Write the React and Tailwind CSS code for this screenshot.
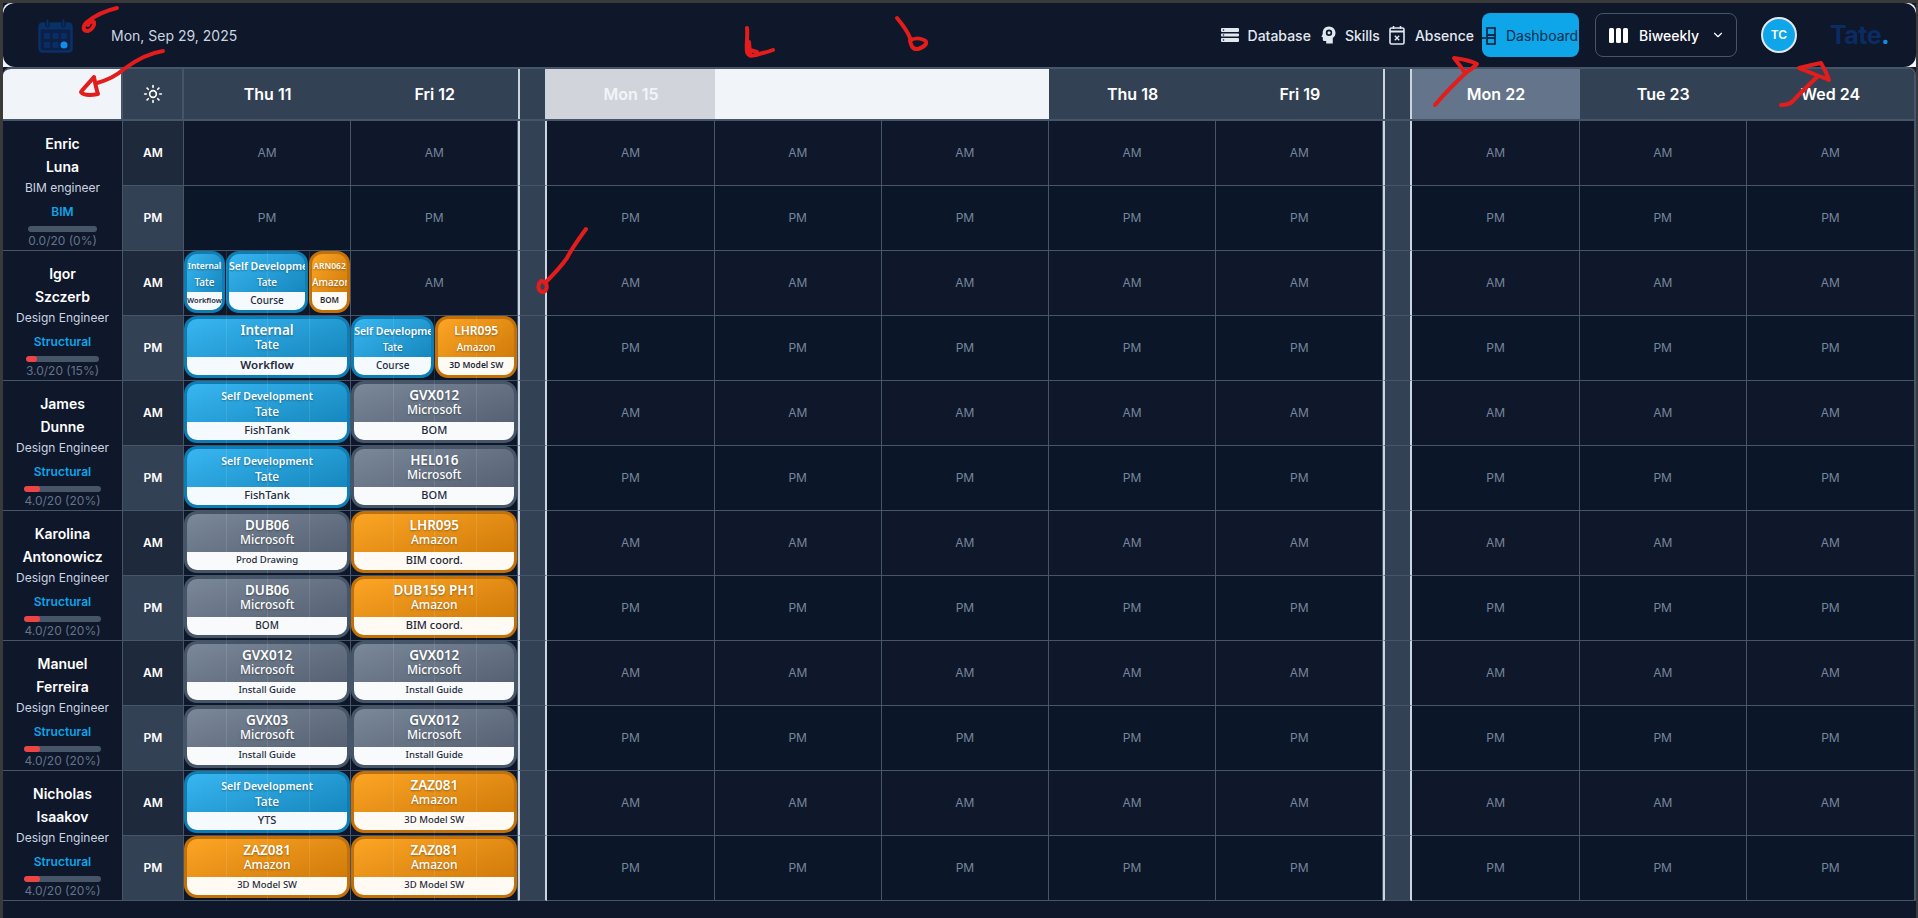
import React from "react";
import { ChevronDown, Sun } from "lucide-react";

const F = { fontFamily: "Inter, 'Liberation Sans', sans-serif" };
const CF = { fontFamily: "'Noto Sans', 'Open Sans', sans-serif" };

const blue = {
  shell: "border-[#0e7db3] bg-gradient-to-br from-[#38b6f1] to-[#0b7fb4]",
  band: "bg-[#f5faff] text-[#1e293b]",
};
const gray = {
  shell: "border-[#475569] bg-gradient-to-br from-[#7b8899] to-[#4f5b6c]",
  band: "bg-[#f8fafc] text-[#1e293b]",
};
const orange = {
  shell: "border-[#c2700a] bg-gradient-to-br from-[#fca524] to-[#c97403]",
  band: "bg-[#fffaf3] text-[#1e293b]",
};

function Card({ c, t, s, d, tone, width = "flex-1", tClass = "text-[13.5px] leading-[15px]", dClass = "text-[11px]" }) {
  return (
    <div className={`${width} ${tone.shell} h-[62px] min-w-0 rounded-[13px] border-[3px] overflow-hidden flex flex-col`}>
      <div className="flex-1 min-h-0 flex flex-col justify-center text-white text-center whitespace-nowrap pb-[1px] [text-shadow:0_1px_2px_rgba(0,0,0,0.35)]">
        <div className={`${tClass} w-full overflow-x-clip font-semibold`}>{t}</div>
        <div className={`${s} w-full overflow-x-clip font-medium leading-[14px]`}>{c}</div>
      </div>
      <div className={`${tone.band} ${dClass} h-[18px] shrink-0 text-center font-medium leading-[16px] whitespace-nowrap overflow-x-clip`}>{d}</div>
    </div>
  );
}

const selfDevTitle = "text-[10.5px] leading-[18px] tracking-[0.1px]";
const Self = (d) => <Card tone={blue} t="Self Development" c="Tate" s="text-[12px]" d={d} tClass={selfDevTitle} />;
const Ms = (t, d, dClass) => <Card tone={gray} t={t} c="Microsoft" s="text-[12px]" d={d} dClass={dClass} />;
const Am = (t, d, dClass) => <Card tone={orange} t={t} c="Amazon" s="text-[12px]" d={d} dClass={dClass} />;

const small = "text-[8.5px] leading-[18px]";

const people = [
  {
    first: "Enric", last: "Luna", role: "BIM engineer", team: "BIM", load: "0.0/20 (0%)", pct: 0,
    cards: [[null, null], [null, null]],
  },
  {
    first: "Igor", last: "Szczerb", role: "Design Engineer", team: "Structural", load: "3.0/20 (15%)", pct: 15,
    cards: [
      [
        <div className="flex gap-[1px] h-full">
          <Card tone={blue} width="w-[41px]" t="Internal" c="Tate" s="text-[10px]" d="Workflow" tClass={small} dClass="text-[7.5px] font-semibold" />
          <Card tone={blue} width="w-[82px]" t="Self Development" c="Tate" s="text-[10px]" d="Course" tClass="text-[10.5px] leading-[18px]" dClass="text-[10px]" />
          <Card tone={orange} width="w-[41px]" t="ARN062" c="Amazon" s="text-[10px]" d="BOM" tClass={small} dClass="text-[8px] font-semibold" />
        </div>,
        null,
      ],
      [
        <Card tone={blue} t="Internal" c="Tate" s="text-[12px]" d="Workflow" dClass="text-[11.5px] font-semibold" />,
        <div className="flex gap-[1px] h-full">
          <Card tone={blue} width="w-[83px]" t="Self Development" c="Tate" s="text-[10px]" d="Course" tClass="text-[10.5px] leading-[18px]" dClass="text-[10px]" />
          <Card tone={orange} width="w-[82px]" t="LHR095" c="Amazon" s="text-[10px]" d="3D Model SW" tClass="text-[12px] leading-[18px]" dClass="text-[8.5px] font-semibold" />
        </div>,
      ],
    ],
  },
  {
    first: "James", last: "Dunne", role: "Design Engineer", team: "Structural", load: "4.0/20 (20%)", pct: 20,
    cards: [
      [Self("FishTank"), Ms("GVX012", "BOM")],
      [Self("FishTank"), Ms("HEL016", "BOM")],
    ],
  },
  {
    first: "Karolina", last: "Antonowicz", role: "Design Engineer", team: "Structural", load: "4.0/20 (20%)", pct: 20,
    cards: [
      [Ms("DUB06", "Prod Drawing", "text-[9.5px]"), Am("LHR095", "BIM coord.")],
      [Ms("DUB06", "BOM", "text-[10px]"), Am("DUB159 PH1", "BIM coord.")],
    ],
  },
  {
    first: "Manuel", last: "Ferreira", role: "Design Engineer", team: "Structural", load: "4.0/20 (20%)", pct: 20,
    cards: [
      [Ms("GVX012", "Install Guide", "text-[9.5px]"), Ms("GVX012", "Install Guide", "text-[9.5px]")],
      [Ms("GVX03", "Install Guide", "text-[9.5px]"), Ms("GVX012", "Install Guide", "text-[9.5px]")],
    ],
  },
  {
    first: "Nicholas", last: "Isaakov", role: "Design Engineer", team: "Structural", load: "4.0/20 (20%)", pct: 20,
    cards: [
      [Self("YTS"), Am("ZAZ081", "3D Model SW", "text-[9.5px]")],
      [Am("ZAZ081", "3D Model SW", "text-[9.5px]"), Am("ZAZ081", "3D Model SW", "text-[9.5px]")],
    ],
  },
];

function DayHead({ children, className = "bg-[#334155] text-white" }) {
  return <div className={`${className} h-[50px] flex items-center justify-center text-[16px] font-semibold`}>{children}</div>;
}

function Gap({ head }) {
  return <div className={`${head ? "h-[50px]" : "h-[65px] border-b border-b-[#475569]"} bg-[#334155] border-l-2 border-r-2 border-l-[#cbd5e1] border-r-[#cbd5e1]`} />;
}

function Slot({ label, am, children, last }) {
  return (
    <div className={`relative h-[65px] border-b border-r border-[#475569] flex items-center justify-center text-[12px] text-[#76869c] ${am ? "bg-[#0f172a]" : "bg-[#0b1728]"} ${last ? "border-r-0" : ""}`}>
      {children ? (
        <>
          <div style={CF} className="absolute left-0 right-0 top-0 h-[62px]">{children}</div>
          <div className="absolute top-0 bottom-0 left-1/4 w-px bg-white/10" />
          <div className="absolute top-0 bottom-0 left-1/2 w-px bg-white/10" />
          <div className="absolute top-0 bottom-0 left-3/4 w-px bg-white/10" />
        </>
      ) : (
        label
      )}
    </div>
  );
}

function PersonRows({ p }) {
  const rows = [0, 1];
  return (
    <>
      {rows.map((r) => {
        const am = r === 0;
        const label = am ? "AM" : "PM";
        return (
          <React.Fragment key={r}>
            {am && (
              <div className="row-span-2 h-[130px] border-b border-r border-[#475569] bg-[#0f172a] flex flex-col items-center pt-[11px] overflow-hidden">
                <div className="text-[14px] font-semibold leading-[23px] text-white">{p.first}</div>
                <div className="text-[14px] font-semibold leading-[23px] text-white">{p.last}</div>
                <div className="text-[12px] leading-[19px] text-[#cbd5e1]">{p.role}</div>
                <div className="mt-[6px] text-[12px] font-semibold leading-[18px] text-[#0ea5e9]">{p.team}</div>
                <div className="mt-[5px] inline-flex flex-col">
                  <div className="h-[6px] rounded-full bg-[#475569] overflow-hidden">
                    <div className="h-full rounded-full bg-[#ef4444]" style={{ width: `${p.pct}%` }} />
                  </div>
                  <div className="text-[12px] leading-[18px] text-[#64748b] whitespace-nowrap">{p.load}</div>
                </div>
              </div>
            )}
            <div className={`h-[65px] border-b border-r border-[#475569] flex items-center justify-center text-[12px] font-semibold text-white ${am ? "bg-[#1e293b]" : "bg-[#334155]"}`}>{label}</div>
            <Slot label={label} am={am}>{p.cards[r][0]}</Slot>
            <Slot label={label} am={am}>{p.cards[r][1]}</Slot>
            <Gap />
            {[0, 1, 2, 3, 4].map((i) => <Slot key={i} label={label} am={am} />)}
            <Gap />
            {[0, 1, 2].map((i) => <Slot key={i} label={label} am={am} last={i === 2} />)}
          </React.Fragment>
        );
      })}
    </>
  );
}

function DbIcon() {
  return (
    <svg width="18" height="16" viewBox="0 0 18 16" fill="#e2e8f0">
      <path d="M1 1h16a1 1 0 0 1 1 1v2a1 1 0 0 1-1 1H1a1 1 0 0 1-1-1V2a1 1 0 0 1 1-1Zm0 5.500h16a1 1 0 0 1 1 1v1a1 1 0 0 1-1 1H1a1 1 0 0 1-1-1v-1a1 1 0 0 1 1-1Zm0 4.500h16a1 1 0 0 1 1 1v2a1 1 0 0 1-1 1H1a1 1 0 0 1-1-1v-2a1 1 0 0 1 1-1Z" />
      <circle cx="2.500" cy="3" r="0.800" fill="#0f172a" />
      <circle cx="2.500" cy="8" r="0.800" fill="#0f172a" />
      <circle cx="2.500" cy="13" r="0.800" fill="#0f172a" />
    </svg>
  );
}
function SkillIcon() {
  return (
    <svg width="15" height="18" viewBox="0 0 15 18" fill="#e2e8f0">
      <path d="M7.800 0.500C11.600 0.500 14.500 3.300 14.500 6.900c0 2.300-1.100 3.900-2.700 5V17.500H5.200v-2.400H3.300c-.9 0-1.500-.7-1.500-1.500v-2.300L.4 10.700 1.700 8V6.900C1.700 3.300 4.200 0.500 7.800 0.500Z" />
      <circle cx="8" cy="6.800" r="3.200" fill="#0f172a" />
      <circle cx="8" cy="6.800" r="1.500" fill="#e2e8f0" />
    </svg>
  );
}
function AbsIcon() {
  return (
    <svg width="16" height="20" viewBox="0 0 16 20" fill="none" stroke="#e2e8f0">
      <rect x="1" y="3" width="14" height="16" rx="1.500" strokeWidth="1.600" />
      <path d="M1 6.500h14" strokeWidth="2" />
      <path d="M4.500 1v3M11.500 1v3" strokeWidth="1.600" />
      <path d="M5.800 10.800l4.400 4.400M10.200 10.800l-4.400 4.400" strokeWidth="1.400" />
    </svg>
  );
}
function DashIcon() {
  return (
    <svg width="14" height="18" viewBox="0 0 14 18" fill="none" stroke="#0c2d4d" strokeWidth="1.800" className="absolute left-0 top-[14px]">
      <path d="M0 11h4" />
      <rect x="5" y="1" width="8" height="16" />
      <path d="M5 8h8M5 11h8" />
    </svg>
  );
}

function CalendarLogo() {
  const cells = [[6, 15], [14.5, 15], [23, 15], [6, 24], [14.5, 24]];
  return (
    <svg width="35" height="35" viewBox="0 0 35 35">
      <rect x="1.500" y="5.500" width="32" height="28" rx="3" fill="#0c1f45" stroke="#0a3068" strokeWidth="2.500" />
      <rect x="1.500" y="5.500" width="32" height="6" fill="#0a3068" />
      <rect x="8" y="1" width="3" height="8" rx="1.500" fill="#0a3068" stroke="#0f172a" />
      <rect x="24" y="1" width="3" height="8" rx="1.500" fill="#0a3068" stroke="#0f172a" />
      {cells.map(([x, y]) => <rect key={`${x}-${y}`} x={x} y={y} width="6" height="6" rx="1" fill="#0a2d66" />)}
      <circle cx="26" cy="27" r="3.500" fill="#0e8fe9" />
    </svg>
  );
}

const inkPaths = [
  "M117 8C108 10 96 15 87 22C82 27 83 31 88 31C92 30 95 25 94 22C92 21 89 22 88 25",
  "M163 51C150 53 136 60 124 69C116 76 108 80 97 83M94 77C89 83 83 89 81 92C84 96 93 95 98 94C96 88 95 82 94 77Z",
  "M586 229C578 240 572 248 567 258C560 268 552 276 545 283M541 281C537 285 538 291 542 292C547 292 548 286 545 282Z",
  "M747 28C748 36 746 44 747 52C749 57 752 56 756 55C762 53 768 52 773 50M749 42L750 54M750 50L757 52",
  "M897 18C902 24 908 32 910 38C910 44 912 50 918 49C925 47 929 42 924 40C919 38 913 38 910 41",
  "M1435 105C1446 92 1458 80 1469 70M1454 58C1461 59 1470 60 1477 64C1473 68 1469 71 1465 73C1462 68 1458 63 1454 58Z",
  "M1781 105C1786 105 1790 104 1793 101C1801 92 1810 84 1817 77M1799 68C1807 66 1815 64 1821 63C1824 68 1827 74 1829 80C1820 76 1808 72 1799 68Z",
];

function Ink() {
  return (
    <svg className="absolute left-0 top-0 pointer-events-none" width="1918" height="918" fill="none" stroke="#e31c1c" strokeWidth="4" strokeLinecap="round" strokeLinejoin="round">
      {inkPaths.map((d) => <path key={d} d={d} />)}
    </svg>
  );
}

export default function App() {
  return (
    <div style={F} className="relative w-[1918px] h-[918px] overflow-hidden bg-[#3a3a3a] pt-[3px] pl-[3px] pr-[2px]">
      <div className="h-[915px] bg-[#0f172a] flex flex-col">
        <div className="bg-[#f1f5f9] h-[64px] shrink-0 rounded-t-lg">
          <header className="h-[64px] bg-[#0f172a] rounded-xl flex items-center pl-[35px] pr-[27px]">
            <CalendarLogo />
            <span className="ml-[38px] text-[14px] text-[#cbd5e1]">Mon, Sep 29, 2025</span>
            <nav className="ml-auto flex items-center text-[14px] font-medium text-[#e2e8f0]">
              <DbIcon />
              <span className="ml-[9px]">Database</span>
              <span className="ml-[10px]"><SkillIcon /></span>
              <span className="ml-[9px]">Skills</span>
              <span className="ml-[9px]"><AbsIcon /></span>
              <span className="ml-[10px]">Absence</span>
              <span className="relative ml-[8px] w-[97px] h-[44px] rounded-lg bg-[#0ea5e9] text-[#0c2d4d] font-normal flex items-center pl-[24px] whitespace-nowrap">
                <DashIcon />Dashboard
              </span>
              <span className="ml-[16px] w-[142px] h-[44px] rounded-lg border border-[#475569] flex items-center pl-[13px] text-white">
                <span className="flex gap-[2px]">
                  <i className="block w-[5px] h-[15px] rounded-[1.500px] bg-white" />
                  <i className="block w-[5px] h-[15px] rounded-[1.500px] bg-white" />
                  <i className="block w-[5px] h-[15px] rounded-[1.500px] bg-white" />
                </span>
                <span className="ml-[11px]">Biweekly</span>
                <ChevronDown size={14} className="ml-[12px]" />
              </span>
              <span className="ml-[24px] w-[36px] h-[36px] rounded-full bg-[#0ea5e9] border-2 border-[#e2e8f0] text-white text-[12px] font-semibold flex items-center justify-center">TC</span>
              <span className="ml-[33px] text-[25px] font-bold tracking-[-0.5px] text-[#0b2c63] leading-none">Tate<span className="text-[#0e8fe9]">.</span></span>
            </nav>
          </header>
        </div>

        <div className="rounded-t-lg overflow-hidden border-t-2 border-r-2 border-[#475569] grid grid-cols-[120px_61px_1fr_1fr_29px_1fr_1fr_1fr_1fr_1fr_29px_1fr_1fr_1fr]">
          <div className="h-[52px] col-span-14 grid grid-cols-subgrid border-b-2 border-[#475569]">
            <div className="h-[50px] bg-[#f1f5f9] border-r-2 border-[#475569] relative">
              <span className="absolute left-[84px] top-[26px] w-[8px] h-px bg-[#cbd5e1]" />
            </div>
            <div className="h-[50px] bg-[#334155] border-r-2 border-[#475569] flex items-center justify-center text-white">
              <Sun size={20} />
            </div>
            <DayHead>Thu 11</DayHead>
            <DayHead>Fri 12</DayHead>
            <Gap head />
            <DayHead className="bg-[#d1d5db] text-[#f1f5f9]">Mon 15</DayHead>
            <DayHead className="bg-[#f1f5f9]" />
            <DayHead className="bg-[#f1f5f9]" />
            <DayHead>Thu 18</DayHead>
            <DayHead>Fri 19</DayHead>
            <Gap head />
            <DayHead className="bg-[#64748b] text-white">Mon 22</DayHead>
            <DayHead>Tue 23</DayHead>
            <DayHead>Wed 24</DayHead>
          </div>
          {people.map((p) => <PersonRows key={p.first} p={p} />)}
        </div>
      </div>
      <Ink />
    </div>
  );
}
